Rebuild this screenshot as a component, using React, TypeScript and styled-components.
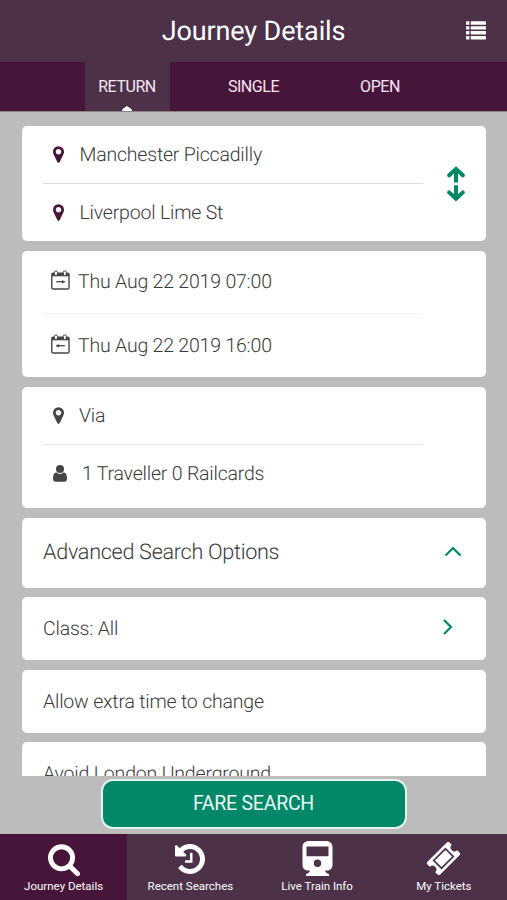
import React from "react";
import styled, { createGlobalStyle } from "styled-components";

const GlobalStyle = createGlobalStyle`
  *, *::before, *::after { box-sizing: border-box; }
  body { margin: 0; font-family: Roboto, "Liberation Sans", sans-serif; text-rendering: geometricPrecision; }
`;

const PLUM = "#48153a";
const MAUVE = "#4c3149";
const GREEN = "#028869";
const GREY = "#bcbcbc";
const INK = "#3a3a3a";

const Screen = styled.div`
  display: flex;
  flex-direction: column;
  width: 507px;
  height: 900px;
  overflow: hidden;
  background: ${GREY};
`;

const Header = styled.header`
  display: grid;
  grid-template-columns: 62px 1fr 62px;
  align-items: center;
  height: 62px;
  flex: none;
  background: ${MAUVE};
  color: #fff;
`;

const Title = styled.h1`
  grid-column: 2;
  margin: 0;
  text-align: center;
  font-size: 27px;
  letter-spacing: -0.12px;
  line-height: 32px;
  font-weight: 400;
`;

const MenuButton = styled.button`
  display: flex;
  padding: 0;
  margin: -2px 0 0 21px;
  border: 0;
  background: none;
  color: #fff;
  width: 20px;
`;

const Tabs = styled.nav`
  display: flex;
  justify-content: center;
  gap: 41.5px;
  height: 50px;
  flex: none;
  background: ${PLUM};
  border-bottom: 1px solid #8f808c;
`;

const Tab = styled.button<{ $active?: boolean }>`
  display: grid;
  grid-template-rows: 1fr 5px;
  justify-items: center;
  align-items: center;
  width: 85px;
  padding: 0;
  border: 0;
  background: ${(p) => (p.$active ? MAUVE : "transparent")};
  color: #f6e6f3;
  font: 400 16px/20px Roboto, sans-serif;
  letter-spacing: -0.45px;
  span { padding-top: 6px; }
  svg { display: block; }
`;

const Options = styled.main`
  display: flex;
  flex-direction: column;
  flex: none;
  height: 664px;
  padding: 13.5px 21px 0 22px;
  overflow: hidden;
`;

const Card = styled.section<{ $h: number; $gap: number }>`
  display: flex;
  flex: none;
  justify-content: space-between;
  height: ${(p) => p.$h}px;
  margin-bottom: ${(p) => p.$gap}px;
  padding-left: 21px;
  background: #fff;
  border-radius: 5px;
  color: ${INK};
`;

const Rows = styled.div`
  display: flex;
  flex-direction: column;
  width: 380px;
`;

const Row = styled.div<{ $h: number; $text: number; $line?: string }>`
  display: grid;
  grid-template-columns: ${(p) => p.$text}px 1fr;
  align-items: center;
  height: ${(p) => p.$h}px;
  border-bottom: ${(p) => (p.$line ? `1px solid ${p.$line}` : "0")};
  font-size: 19.5px;
  font-weight: 300;
  letter-spacing: -0.2px;
  white-space: nowrap;
`;

const IconSlot = styled.span<{ $left: number; $color?: string; $lift?: number }>`
  display: flex;
  padding-left: ${(p) => p.$left}px;
  padding-bottom: ${(p) => p.$lift ?? 0}px;
  color: ${(p) => p.$color ?? "#454545"};
`;

const Swap = styled.button`
  display: flex;
  align-items: center;
  padding: 2px 0 0;
  margin-right: 21.5px;
  border: 0;
  background: none;
  color: ${GREEN};
`;

const Label = styled.span<{ $size: number; $ls: number }>`
  align-self: center;
  font-size: ${(p) => p.$size}px;
  letter-spacing: ${(p) => p.$ls}px;
  font-weight: 300;
  white-space: nowrap;
`;

const Chevron = styled.span<{ $right: number }>`
  display: flex;
  align-items: center;
  padding-bottom: 3px;
  margin-right: ${(p) => p.$right}px;
  color: ${GREEN};
`;

const Action = styled.div`
  display: flex;
  justify-content: center;
  height: 58px;
  padding-top: 3px;
  flex: none;
`;

const FareButton = styled.button`
  width: 306px;
  height: 50px;
  padding: 0;
  border: 2px solid #e4f3ef;
  border-radius: 12px;
  background: ${GREEN};
  color: #e9f8f4;
  font: 400 19.5px/24px Roboto, sans-serif;
  letter-spacing: -0.25px;
`;

const BottomNav = styled.nav`
  display: grid;
  grid-template-columns: repeat(4, 1fr);
  height: 66px;
  flex: none;
  background: ${MAUVE};
`;

const NavItem = styled.button<{ $active?: boolean }>`
  display: grid;
  grid-template-rows: 35px 19px;
  justify-items: center;
  align-items: center;
  align-content: start;
  padding: 7px 0 0 0.5px;
  border: 0;
  background: ${(p) => (p.$active ? PLUM : "transparent")};
  color: #fff;
  font: 400 11.5px/14px Roboto, sans-serif;
  white-space: nowrap;
`;

const Pin = () => (
  <svg width="11" height="17" viewBox="0 128 1024 1536" fill="currentColor">
    <path d="M768 640q0-106-75-181t-181-75-181 75-75 181 75 181 181 75 181-75 75-181zm256 0q0 109-33 179l-364 774q-16 33-47.5 52t-67.5 19-67.5-19-46.5-52l-365-774q-33-70-33-179 0-212 150-362t362-150 362 150 150 362z" />
  </svg>
);

const Calendar = ({ back }: { back?: boolean }) => (
  <svg width="19" height="20" viewBox="0 0 19 20" fill="none" stroke="currentColor">
    <rect x="0.8" y="3.3" width="17.2" height="15.7" rx="1.3" strokeWidth="1.4" />
    <path d="M1 3h17v3.3H1z" fill="currentColor" stroke="none" />
    <rect x="3.5" y="0.9" width="3" height="4.6" rx="1.5" fill="#fff" />
    <rect x="12.3" y="0.9" width="3" height="4.6" rx="1.5" fill="#fff" />
    <path d="M5.2 11.7h8.6" strokeWidth="1.3" />
    <path d={back ? "M5 11.7l3-1.7v3.4z" : "M14 11.7l-3-1.7v3.4z"} fill="currentColor" stroke="none" />
  </svg>
);

const Person = () => (
  <svg width="14" height="17" viewBox="0 0 14 17" fill="currentColor">
    <circle cx="7" cy="4" r="4" />
    <path d="M3.3 7.2C1 7.6 0 10 0 13.2c0 2.5 1 3.5 2.8 3.5h8.4c1.8 0 2.8-1 2.8-3.5 0-3.2-1-5.6-3.3-6C9.7 8.3 8.4 8.9 7 8.9S4.3 8.3 3.3 7.2z" />
  </svg>
);

const SwapArrows = () => (
  <svg width="18" height="36" viewBox="0 0 18 36" fill="none" stroke="currentColor" strokeWidth="4">
    <path d="M9 3v13.6M9 19.2V33" />
    <path d="M2.2 9.3L9 2.9l6.8 6.4M2.2 26.4L9 32.8l6.8-6.4" strokeLinecap="round" />
  </svg>
);

const ListIcon = () => (
  <svg width="20" height="19" viewBox="0 0 20 19" fill="currentColor">
    {[0.3, 5.2, 10.1, 15].map((y) => (
      <g key={y}>
        <rect x="0" y={y} width="3.4" height="3.4" rx="0.5" />
        <rect x="4.7" y={y} width="15.3" height="3.4" rx="0.4" />
      </g>
    ))}
  </svg>
);

const SearchIcon = () => (
  <svg width="32" height="32" viewBox="0 64 1664 1664" fill="currentColor" overflow="visible">
    <path d="M1152 832q0-185-131.5-316.5t-316.5-131.5-316.5 131.5-131.5 316.5 131.5 316.5 316.5 131.5 316.5-131.5 131.5-316.5zm512 832q0 52-38 90t-90 38q-54 0-90-38l-343-342q-179 124-399 124-143 0-273.5-55.5t-225-150-150-225-55.5-273.5 55.5-273.5 150-225 225-150 273.5-55.5 273.5 55.5 225 150 150 225 55.5 273.5q0 220-124 399l343 343q37 37 37 90z" />
  </svg>
);

const HistoryIcon = () => (
  <svg width="30" height="30" viewBox="0 128 1536 1536" fill="currentColor">
    <path d="M1536 896q0 156-61 298t-164 245-245 164-298 61q-172 0-327-72.5t-264-204.5q-7-10-6.5-22.5t8.5-20.5l137-138q10-9 25-9 16 2 23 12 73 95 179 147t225 52q104 0 198.5-40.5t163.5-109.5 109.5-163.5 40.5-198.5-40.5-198.5-109.5-163.5-163.5-109.5-198.5-40.5q-98 0-188 35.5t-160 101.5l137 138q31 30 14 69-17 40-59 40h-448q-26 0-45-19t-19-45v-448q0-42 40-59 39-17 69 14l130 129q107-101 244.5-156.5t284.5-55.5q156 0 298 61t245 164 164 245 61 298zm-640-288v448q0 14-9 23t-23 9h-320q-14 0-23-9t-9-23v-64q0-14 9-23t23-9h224v-352q0-14 9-23t23-9h64q14 0 23 9t9 23z" />
  </svg>
);

const TrainIcon = () => (
  <svg width="31" height="35" viewBox="0 0 31 35" fill="currentColor">
    <path
      fillRule="evenodd"
      d="M7 0h17c4 0 6.5 2.5 6.5 6v18c0 3-2 5.5-5.5 5.5h-2c.5 1.800 1.700 3 4 3.500V35H4v-2c2.300-.5 3.500-1.700 4-3.500H6C2.500 29.500.5 27 .5 24V6C.5 2.500 3 0 7 0zM4.500 5.500v9.800h22V5.500zM15.500 18.600a3.700 3.700 0 1 0 0 7.400 3.700 3.700 0 0 0 0-7.400z"
    />
  </svg>
);

const TicketIcon = () => (
  <svg width="33" height="33" viewBox="0 0 33 33">
    <g transform="rotate(-45 16.5 16.5)">
      <path
        fill="currentColor"
        d="M2.5 7.5h28a1.5 1.5 0 0 1 1.5 1.5v3.7a3.800 3.800 0 0 0 0 7.600V24a1.500 1.500 0 0 1-1.500 1.500h-28A1.500 1.500 0 0 1 1 24v-3.700a3.800 3.800 0 0 0 0-7.600V9a1.500 1.500 0 0 1 1.500-1.500z"
      />
      <rect x="8.2" y="11" width="16.6" height="11" fill="none" stroke={MAUVE} strokeWidth="1.7" />
    </g>
  </svg>
);

const navItems = [
  { label: "Journey Details", icon: <SearchIcon /> },
  { label: "Recent Searches", icon: <HistoryIcon /> },
  { label: "Live Train Info", icon: <TrainIcon /> },
  { label: "My Tickets", icon: <TicketIcon /> },
];

export default function App() {
  return (
    <>
      <GlobalStyle />
      <Screen>
        <Header>
          <Title>Journey Details</Title>
          <MenuButton aria-label="Menu"><ListIcon /></MenuButton>
        </Header>
        <Tabs>
          <Tab $active>
            <span>RETURN</span>
            <svg width="10" height="5" viewBox="0 0 10 5"><path d="M0 5Q0 3.500 1 2.800L5 0l4 2.800Q10 3.500 10 5z" fill="#fff" /></svg>
          </Tab>
          <Tab><span>SINGLE</span></Tab>
          <Tab><span>OPEN</span></Tab>
        </Tabs>
        <Options>
          <Card $h={115.5} $gap={9.5}>
            <Rows>
              <Row $h={58.5} $text={36.5} $line="#dedede">
                <IconSlot $left={10} $color={PLUM}><Pin /></IconSlot>Manchester Piccadilly
              </Row>
              <Row $h={57.5} $text={36.5}>
                <IconSlot $left={10} $color={PLUM}><Pin /></IconSlot>Liverpool Lime St
              </Row>
            </Rows>
            <Swap aria-label="Swap stations"><SwapArrows /></Swap>
          </Card>
          <Card $h={126} $gap={10}>
            <Rows>
              <Row $h={63.5} $text={35} $line="#f1f1f1">
                <IconSlot $left={8} $lift={3}><Calendar /></IconSlot>Thu Aug 22 2019 07:00
              </Row>
              <Row $h={62} $text={35}>
                <IconSlot $left={8} $lift={3}><Calendar back /></IconSlot>Thu Aug 22 2019 16:00
              </Row>
            </Rows>
          </Card>
          <Card $h={121} $gap={10.5}>
            <Rows>
              <Row $h={58} $text={36} $line="#e8e8e8">
                <IconSlot $left={10}><Pin /></IconSlot>Via
              </Row>
              <Row $h={57} $text={39}>
                <IconSlot $left={10}><Person /></IconSlot>1 Traveller 0 Railcards
              </Row>
            </Rows>
          </Card>
          <Card $h={69.5} $gap={9.5}>
            <Label $size={21.6} $ls={-0.29}>Advanced Search Options</Label>
            <Chevron $right={25}>
              <svg width="16" height="11" viewBox="0 0 16 11" fill="none" stroke="currentColor" strokeWidth="2.2"><path d="M0.5 9.5L8 2l7.5 7.5" /></svg>
            </Chevron>
          </Card>
          <Card $h={63} $gap={9.5}>
            <Label $size={19.5} $ls={-0.2}>Class: All</Label>
            <Chevron $right={33}>
              <svg width="10" height="16" viewBox="0 0 10 16" fill="none" stroke="currentColor" strokeWidth="2.2"><path d="M1 1L8 8l-7 7" /></svg>
            </Chevron>
          </Card>
          <Card $h={63} $gap={9.5}>
            <Label $size={19.5} $ls={-0.2}>Allow extra time to change</Label>
          </Card>
          <Card $h={63} $gap={0}>
            <Label $size={19.5} $ls={-0.18}>Avoid London Underground</Label>
          </Card>
        </Options>
        <Action><FareButton>FARE SEARCH</FareButton></Action>
        <BottomNav>
          {navItems.map((item, i) => (
            <NavItem key={item.label} $active={i === 0}>
              {item.icon}
              <span>{item.label}</span>
            </NavItem>
          ))}
        </BottomNav>
      </Screen>
    </>
  );
}
